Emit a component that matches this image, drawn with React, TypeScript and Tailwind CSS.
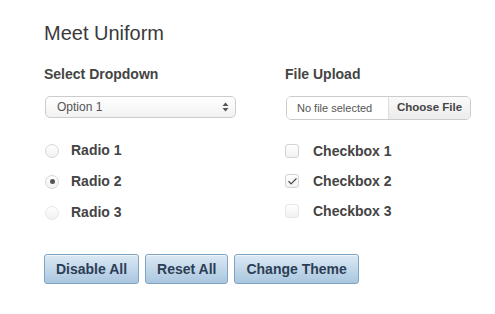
import { Check } from "lucide-react";

const font = { fontFamily: '"Liberation Sans", Arial, sans-serif' };

function Radio({ label, checked, faded }: { label: string; checked?: boolean; faded?: boolean }) {
  return (
    <label className="flex h-[31px] items-center">
      <span
        className={`ml-[1px] flex h-[14px] w-[14px] items-center justify-center rounded-full border bg-gradient-to-b from-white to-[#f1f1f1] ${
          faded ? "border-[#e8e8e8]" : "border-[#d6d6d6]"
        }`}
      >
        {checked && <span className="h-[5px] w-[5px] rounded-full bg-[#555]" />}
      </span>
      <span className="ml-[12px] text-[14px] font-bold text-[#444]">{label}</span>
    </label>
  );
}

function CheckBox({ label, checked, faded }: { label: string; checked?: boolean; faded?: boolean }) {
  return (
    <label className="flex h-[30px] items-center">
      <span
        className={`flex h-[14px] w-[14px] items-center justify-center rounded-[3px] border bg-gradient-to-b from-white to-[#f1f1f1] ${
          faded ? "border-[#e8e8e8]" : "border-[#d3d3d3]"
        }`}
      >
        {checked && <Check size={11} strokeWidth={2.5} className="text-[#444]" />}
      </span>
      <span className="ml-[14px] text-[14px] font-bold text-[#444]">{label}</span>
    </label>
  );
}

function Btn({ children }: { children: React.ReactNode }) {
  return (
    <button className="h-[30px] rounded-[3px] border border-[#7fa3c2] bg-gradient-to-b from-[#dce9f4] to-[#a9c6df] px-[11px] text-[14px] font-bold text-[#2c3e56] shadow-[inset_0_1px_0_rgba(255,255,255,0.6)]">
      {children}
    </button>
  );
}

export default function App() {
  return (
    <div className="h-[314px] w-[495px] bg-white pl-[44px] pt-[20px]" style={font}>
      <h1 className="text-[20px] font-light leading-[26px] text-[#3a3a3a]">Meet Uniform</h1>
      <div className="mt-[20px] grid grid-cols-[192px_186px] gap-x-[49px]">
        <div>
          <h3 className="text-[14px] font-bold leading-[16px] text-[#444]">Select Dropdown</h3>
          <div className="mt-[14px] ml-[1px] flex h-[22px] items-center justify-between rounded-[5px] border border-[#ccc] bg-gradient-to-b from-white to-[#f2f2f2] pl-[11px] pr-[6px]">
            <span className="text-[12px] text-[#555]">Option 1</span>
            <svg width="7" height="10" viewBox="0 0 7 10">
              <path d="M3.5 0.5 L6.5 4 L0.5 4 Z" fill="#555" />
              <path d="M3.5 9.5 L6.5 6 L0.5 6 Z" fill="#555" />
            </svg>
          </div>
          <div className="mt-[17px]">
            <Radio label="Radio 1" />
            <Radio label="Radio 2" checked />
            <Radio label="Radio 3" faded />
          </div>
        </div>
        <div>
          <h3 className="text-[14px] font-bold leading-[16px] text-[#444]">File Upload</h3>
          <div className="mt-[14px] ml-[1px] flex h-[24px] w-[185px] overflow-hidden rounded-[5px] border border-[#ccc]">
            <span className="flex w-[102px] items-center border-r border-[#ddd] bg-white pl-[10px] text-[11px] text-[#555]">
              No file selected
            </span>
            <span className="flex flex-1 items-center justify-center bg-gradient-to-b from-[#fafafa] to-[#ececec] text-[11.5px] font-bold text-[#444]">
              Choose File
            </span>
          </div>
          <div className="mt-[16px]">
            <CheckBox label="Checkbox 1" />
            <CheckBox label="Checkbox 2" checked />
            <CheckBox label="Checkbox 3" faded />
          </div>
        </div>
      </div>
      <div className="mt-[26px] flex gap-[6px]">
        <Btn>Disable All</Btn>
        <Btn>Reset All</Btn>
        <Btn>Change Theme</Btn>
      </div>
    </div>
  );
}
